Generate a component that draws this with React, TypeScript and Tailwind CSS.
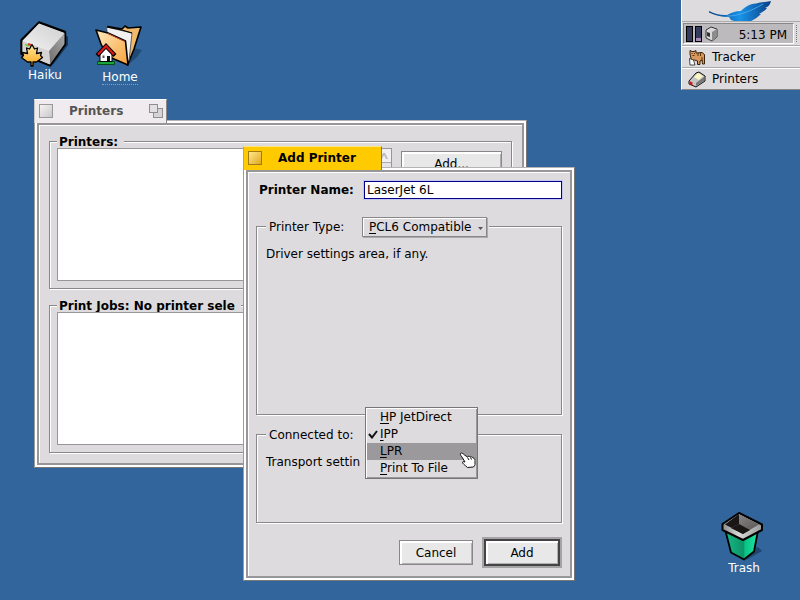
import React from "react";
import type { ReactNode } from "react";

function TabBox({ active }: { active?: boolean }) {
  return (
    <button
      type="button"
      aria-label="Close"
      className={
        active
          ? "size-[14px] shrink-0 border border-[#a07c10] bg-linear-to-br from-[#ffe88a] to-[#e0a800]"
          : "size-[14px] shrink-0 border border-[#999] bg-linear-to-br from-[#f4f4f4] to-[#c8c8c8]"
      }
    />
  );
}

function ZoomBox() {
  return (
    <button type="button" aria-label="Zoom" className="ml-auto size-[14px] shrink-0">
      <svg viewBox="0 0 14 14" className="size-[14px]">
        <rect x="4.500" y="4.500" width="9" height="9" fill="#d6d4d6" stroke="#8e8e8e" />
        <rect x="0.500" y="0.500" width="8" height="8" fill="#e2e0e2" stroke="#8e8e8e" />
      </svg>
    </button>
  );
}

type WindowProps = {
  title: string;
  active?: boolean;
  place: string;
  children: ReactNode;
};

function DesktopWindow({ title, active, place, children }: WindowProps) {
  return (
    <section aria-label={title} className={"absolute " + place}>
      <header
        className={
          active
            ? "relative -mb-[3px] flex h-6 w-[139px] gap-4 border-t border-r border-l border-t-[#ffe680] border-r-[#8a7a30] border-l-[#b0a880] bg-[#ffcb00] px-1 pt-1"
            : "relative -mb-[3px] flex h-6 w-[133px] gap-4 border-t border-r border-l border-t-white border-r-[#888] border-l-[#c8c8c8] bg-[#efebef] px-1 pt-1 pr-[3px]"
        }
      >
        <TabBox active={active} />
        <h2
          className={
            active
              ? "text-xs leading-[14px] font-bold text-black"
              : "text-xs leading-[14px] font-bold text-[#555]"
          }
        >
          {title}
        </h2>
        {!active && <ZoomBox />}
      </header>
      <div className="border border-t-[#b4b4b4] border-r-[#777] border-b-[#777] border-l-[#9c9c9c] bg-white p-[2px]">
        <div className="border-2 border-[#989698]">
          <div className="border-t border-l border-white bg-[#dedbde]">{children}</div>
        </div>
      </div>
    </section>
  );
}

const groupLine = "border border-[#888] shadow-[inset_1px_1px_0_#fff,1px_1px_0_#fff]";

function ListGroup({ title, children }: { title: string; children?: ReactNode }) {
  return (
    <fieldset className={"flex px-[7px] pb-[7px] " + groupLine}>
      <legend className="h-[14px] bg-[#dedbde] pr-[6px] pl-[2px] text-xs leading-[17px] font-bold whitespace-nowrap">
        {title}
      </legend>
      <div className="flex items-start gap-[9px]">
        <div className="relative flex h-[133px] w-[335px] justify-end border border-[#989698] bg-white">
          <div className="flex w-[15px] flex-col border-l border-[#989698] bg-[#e6e4e6]">
            <button
              type="button"
              aria-label="Scroll up"
              className="flex h-[14px] items-center justify-center border-b border-[#aaa] bg-[#f2f0f2]"
            >
              <svg viewBox="0 0 8 6" className="h-[6px] w-2">
                <path d="M0 6L3 0h2l3 6H6L4 2 2 6z" fill="#bbb" />
              </svg>
            </button>
          </div>
        </div>
        {children}
      </div>
    </fieldset>
  );
}

const raised =
  "border border-[#888] bg-[#e8e8e8] text-xs shadow-[inset_2px_2px_0_#fff,inset_-1px_-1px_0_#b0b0b0]";

function MenuItem({
  first,
  rest,
  checked,
  hover,
}: {
  first: string;
  rest: string;
  checked?: boolean;
  hover?: boolean;
}) {
  return (
    <li role="none">
      <button
        type="button"
        role="menuitemradio"
        aria-checked={!!checked}
        className={
          hover
            ? "flex h-[17px] w-full items-center bg-[#9b999b] text-left leading-[17px]"
            : "flex h-[17px] w-full items-center text-left leading-[17px]"
        }
      >
        <span className="flex w-[13px] justify-end pr-[2px]">
          {checked && (
            <svg viewBox="0 0 10 9" className="h-[9px] w-[10px]">
              <path d="M1 4l3 3.500L9 1" fill="none" stroke="#111" strokeWidth="2" />
            </svg>
          )}
        </span>
        <span>
          <u className="underline-offset-2">{first}</u>
          {rest}
        </span>
      </button>
    </li>
  );
}

function HandCursor() {
  return (
    <svg viewBox="0 0 18 18" className="absolute top-[44px] left-[93px] size-[18px]" aria-hidden="true">
      <path
        d="M1.500 1.500c1-1 2.500 0 4 1.500l3 2c.5-1 2-1 3 0 1-.5 2 .2 2.500 1 1 0 2 1 2 2.500v4c0 1-1 1.500-1.500 2.500l-6 .5c-1-1.500-3-2-4-3.500-1-1-1.500-2-.5-2.500l2 .5-3-5C2 4 1 2.500 1.500 1.500z"
        fill="#fff"
        stroke="#111"
      />
      <path d="M8.500 5.500l1.500 2.500M11.500 5.500l1 2" stroke="#111" fill="none" />
    </svg>
  );
}

function HaikuIcon() {
  return (
    <svg viewBox="0 0 50 48" className="h-12 w-[50px]">
      <defs>
        <linearGradient id="driveTop" x1="0" y1="1" x2="1" y2="0">
          <stop offset="0" stopColor="#f2f2f2" />
          <stop offset="1" stopColor="#cfcfcf" />
        </linearGradient>
        <linearGradient id="driveSide" x1="0" y1="1" x2="1" y2="0">
          <stop offset="0" stopColor="#6e6e6e" />
          <stop offset="1" stopColor="#a8a8a8" />
        </linearGradient>
        <linearGradient id="leafFill" x1="0" y1="0" x2="0" y2="1">
          <stop offset="0" stopColor="#ffe9a0" />
          <stop offset="1" stopColor="#f7a71c" />
        </linearGradient>
      </defs>
      <path d="M32 46L48 25v-8l-4-3z" fill="#102c48" opacity=".8" />
      <path d="M19 2.500L45 12v12L30 45.500 1.500 34V20z" fill="#dcdcdc" stroke="#000" strokeWidth="2.400" strokeLinejoin="round" />
      <path d="M19 3.500L44.500 13 29 31 2.500 21z" fill="url(#driveTop)" />
      <path d="M29 31L44.500 13v11L30 44.500z" fill="url(#driveSide)" />
      <path d="M2.500 21L29 31l1 13.500L2.500 33z" fill="#d4d4d4" />
      <path d="M5 24.500l4 1.500" stroke="#8c4" strokeWidth="2" />
      <path d="M8 24l3 1" stroke="#c33" strokeWidth="2" />
      <path
        d="M12 24.500l2.500 4.500 3-1-1 5.500 5-1-1 3 2 2-6 4.500h-3.500v4h-2v-4H7.500l-6-4.500 2-2-1-3 5 1-1-5.500 3 1z"
        fill="url(#leafFill)"
        stroke="#000"
        strokeWidth="1.300"
        strokeLinejoin="round"
      />
    </svg>
  );
}

function HomeIcon() {
  return (
    <svg viewBox="0 0 50 48" className="h-12 w-[50px]">
      <defs>
        <linearGradient id="folder" x1="0" y1="0" x2="1" y2="1">
          <stop offset="0" stopColor="#ffe9c0" />
          <stop offset="1" stopColor="#f7a23a" />
        </linearGradient>
      </defs>
      <path d="M33 43l9-8 5-7-8-2z" fill="#173a5c" opacity=".6" />
      <path
        d="M13 4.500L27 7l3-3 3 2 13-1-7 22-6.500 16L20 30z"
        fill="#f0b96c"
        stroke="#000"
        strokeWidth="1.600"
        strokeLinejoin="round"
      />
      <path d="M11.500 5L37 11l-3 28-20-14z" fill="#f0f0f0" stroke="#444" strokeWidth=".8" />
      <path d="M12 5l15 3 10 3" fill="none" stroke="#000" strokeWidth="1.200" />
      <path
        d="M1 8l12 3 17.500 8L33 43 12 34 6 22z"
        fill="url(#folder)"
        stroke="#000"
        strokeWidth="1.600"
        strokeLinejoin="round"
      />
      <path d="M13 11.500l17 8" stroke="#b8402a" strokeWidth="1" />
      <path d="M2.500 39.500h17v3h-17z" fill="#19a43c" stroke="#064d14" />
      <path d="M5 32l6-6 6 6v7.500H5z" fill="#fff" stroke="#000" />
      <path d="M12 34h3v5h-3z" fill="#111" />
      <path d="M7.500 33.500h2v2.500h-2z" fill="#555" />
      <path d="M2 33.500l9-9.500 9 9.500" fill="none" stroke="#000" strokeWidth="4" />
      <path d="M3 32.500l8-8.500 8 8.500" fill="none" stroke="#e01818" strokeWidth="2.200" />
    </svg>
  );
}

function TrashIcon() {
  return (
    <svg viewBox="0 0 46 50" className="h-[50px] w-[46px]">
      <defs>
        <linearGradient id="bin" x1="0" y1="0" x2="1" y2="0">
          <stop offset="0" stopColor="#18b884" />
          <stop offset=".55" stopColor="#0c9468" />
          <stop offset=".6" stopColor="#08c282" />
          <stop offset="1" stopColor="#20e8a6" />
        </linearGradient>
        <linearGradient id="wall" x1="0" y1="0" x2="1" y2="1">
          <stop offset="0" stopColor="#8f8f8f" />
          <stop offset="1" stopColor="#55504f" />
        </linearGradient>
        <linearGradient id="rim" x1="0" y1="0" x2="1" y2="0">
          <stop offset="0" stopColor="#8c8c8c" />
          <stop offset=".4" stopColor="#d8d8d8" />
          <stop offset="1" stopColor="#9a9a9a" />
        </linearGradient>
      </defs>
      <path d="M25 49l16-9-4-4-6 2z" fill="#173a5c" opacity=".7" />
      <path d="M4.500 20L10 41.500l13 7 10-8 4-21z" fill="url(#bin)" stroke="#000" strokeWidth="1.800" strokeLinejoin="round" />
      <path
        d="M18 2L1.500 13v6L22 29l19-10v-5.500z"
        fill="url(#rim)"
        stroke="#000"
        strokeWidth="2"
        strokeLinejoin="round"
      />
      <path d="M18 3L4 13.500 22 23l-4-9z" fill="#1a1616" />
      <path d="M18 3l20 10.500L22 23 10 17l8-4z" fill="url(#wall)" />
      <path d="M18 13l-8 4 12 6 7-4z" fill="#1a1616" />
    </svg>
  );
}

function Feather() {
  return (
    <svg viewBox="0 0 66 21" className="h-[21px] w-[66px]" aria-hidden="true">
      <defs>
        <linearGradient id="feather" x1="0" y1="0" x2="1" y2="0">
          <stop offset="0" stopColor="#0b3f86" />
          <stop offset=".5" stopColor="#1a93e8" />
          <stop offset="1" stopColor="#0a3f86" />
        </linearGradient>
      </defs>
      <path
        d="M1 11c6 3 12 4.500 18 4 4-2 8-4 14-4 4-4 8-7 15-7.500 5-1.500 10-1.500 15-2.500-1 4-3 6-6 7h2c-2 3-5 4-8 6h2c-3 3-6 5-10 7H26l-3-1-2-3C13 17 6 15 1 12.500z"
        fill="url(#feather)"
      />
      <path d="M19 16c12 0 24-5 36-12" fill="none" stroke="#5ab8f4" strokeWidth=".7" />
    </svg>
  );
}

function TrackerIcon() {
  return (
    <svg viewBox="0 0 18 17" className="h-[17px] w-[18px]" aria-hidden="true">
      <path
        d="M2 5V1.500l2 1h2l2-1V4l6-.5 2.500 2V15h-2l-.5-4-2 1v3.500H9.500V12l-3-1-3 .5z"
        fill="#d9995c"
        stroke="#3a2208"
        strokeLinejoin="round"
      />
      <path d="M1.500 9.500l4 1.500 1.500 5H2z" fill="#fff" stroke="#222" strokeWidth=".8" />
      <path d="M3.500 4.500h1M6 4.500h1M4.500 6.500h2M10 4v3M12.500 4v3M14 8v4" stroke="#5a3208" />
    </svg>
  );
}

function PrinterIcon() {
  return (
    <svg viewBox="0 0 18 17" className="h-[17px] w-[18px]" aria-hidden="true">
      <path d="M1 10l7-8 3-1 6 4v5l-9 6-7-3z" fill="#c4c4c4" stroke="#111" strokeLinejoin="round" />
      <path d="M6 6l4-4 5 3-4 4z" fill="#fbf7c0" />
      <path d="M8 12l8-6v4l-8 5z" fill="#777" />
      <path d="M1.500 10l3 1.500V15L2 13z" fill="#d01818" />
    </svg>
  );
}

function TrayDevice() {
  return (
    <svg viewBox="0 0 14 16" className="h-4 w-[14px]" aria-hidden="true">
      <path d="M1 4l5-3 6 2v8l-5 4-6-3z" fill="#d8d8d8" stroke="#333" strokeLinejoin="round" />
      <path d="M7 6l5-3v8l-5 4z" fill="#8c8c8c" />
      <path d="M2 6l3 1v4l-3-1z" fill="#333" />
    </svg>
  );
}

function DesktopIcon({
  label,
  place,
  marked,
  children,
}: {
  label: string;
  place: string;
  marked?: boolean;
  children: ReactNode;
}) {
  return (
    <button type="button" className={"absolute flex flex-col items-center text-xs text-white " + place}>
      {children}
      <span
        className={
          marked ? "border-b border-dotted border-[#7fa0c4] leading-[14px]" : "leading-[15px]"
        }
      >
        {label}
      </span>
    </button>
  );
}

function Deskbar() {
  return (
    <nav className="absolute top-0 right-0 w-[119px] border-b border-l border-b-[#888] border-l-white bg-[#dedbde] text-xs">
      <div className="flex h-[22px] items-end justify-center border-b border-[#aaa]">
        <Feather />
      </div>
      <div className="flex h-6 gap-[2px] border-b border-[#aaa] pt-[1px] pr-[2px] pb-[1px] pl-[1px]">
        <div className="flex flex-1 items-center border border-t-[#888] border-r-white border-b-white border-l-[#888] bg-[#bdbabd] px-[2px]">
          <div className="flex h-4 gap-[2px]">
            <span className="w-[7px] border border-black bg-[#363a5c]" />
            <span className="flex w-[7px] items-end border border-black bg-[#363a5c]">
              <span className="h-[3px] w-full bg-[#a888b8]" />
            </span>
          </div>
          <span className="ml-[3px]">
            <TrayDevice />
          </span>
          <time className="ml-auto pt-[2px] pr-1">5:13 PM</time>
        </div>
        <span className="my-[2px] w-[2px] border-l border-dotted border-[#777]" />
      </div>
      <button
        type="button"
        className="flex h-[22px] w-full items-center gap-[6px] border-t border-b border-t-white border-b-[#aaa] pl-[6px]"
      >
        <TrackerIcon />
        Tracker
      </button>
      <button type="button" className="flex h-[21px] w-full items-center gap-[6px] border-t border-white pl-[6px]">
        <PrinterIcon />
        Printers
      </button>
    </nav>
  );
}

export default function App() {
  return (
    <main className="relative min-h-screen w-full overflow-hidden bg-[#31659c] font-['DejaVu_Sans',sans-serif] text-xs text-black">
      <DesktopIcon label="Haiku" place="top-5 left-5">
        <HaikuIcon />
      </DesktopIcon>
      <DesktopIcon label="Home" place="top-[22px] left-[95px]" marked>
        <HomeIcon />
      </DesktopIcon>
      <DesktopIcon label="Trash" place="right-[33px] bottom-6">
        <TrashIcon />
      </DesktopIcon>

      <Deskbar />

      <DesktopWindow title="Printers" place="top-[99px] left-[34px] w-[493px]">
        <div className="flex flex-col gap-[9px] pt-2 pr-[10px] pb-[10px] pl-[9px]">
          <ListGroup title="Printers:">
            <button type="button" className={"mt-[3px] h-[25px] w-[101px] " + raised}>
              Add...
            </button>
          </ListGroup>
          <ListGroup title="Print Jobs: No printer sele" />
        </div>
      </DesktopWindow>

      <DesktopWindow title="Add Printer" active place="top-[146px] left-[243px] w-[332px]">
        <form className="pt-2 pr-2 pb-2 pl-[7px]" onSubmit={(e) => e.preventDefault()}>
          <div className="flex items-center gap-2 pl-[3px]">
            <label htmlFor="printer-name" className="w-[97px] font-bold whitespace-nowrap">
              Printer Name:
            </label>
            <input
              id="printer-name"
              defaultValue="LaserJet 6L"
              className="h-[18px] min-w-0 flex-1 border border-[#00008c] bg-white px-[2px] shadow-[0_0_0_1px_#c4c4ee] outline-none"
            />
          </div>

          <fieldset className={"mt-[17px] h-[199px] px-[9px] " + groupLine}>
            <legend className="bg-[#dedbde] pr-[2px] pl-[3px]">
              <div className="flex h-[21px] items-center gap-[15px]">
                <label htmlFor="printer-type" className="w-[78px] whitespace-nowrap">
                  Printer Type:
                </label>
                <div className="relative">
                  <select
                    id="printer-type"
                    className="block h-5 w-[125px] appearance-none border border-[#888] bg-[#dedbde] pl-[6px] text-xs shadow-[inset_1px_1px_0_#fff,1px_1px_0_#aaa] outline-none"
                  >
                    <option>PCL6 Compatible</option>
                  </select>
                  <span className="absolute bottom-[3px] left-[7px] h-px w-[7px] bg-black" />
                  <svg
                    viewBox="0 0 5 3"
                    className="pointer-events-none absolute top-[10px] right-1 h-[3px] w-[5px]"
                    aria-hidden="true"
                  >
                    <path d="M0 0h5L2.500 3z" fill="#555" />
                  </svg>
                </div>
              </div>
            </legend>
            <p className="pt-[9px]">Driver settings area, if any.</p>
          </fieldset>

          <fieldset className={"mt-[9px] h-[99px] px-[9px] " + groupLine}>
            <legend className="bg-[#dedbde] pl-[3px]">
              <div className="flex h-[21px] items-center gap-2">
                <span id="transport" className="w-[88px] whitespace-nowrap">
                  Connected to:
                </span>
                <div className="relative h-[21px] w-[113px]">
                  <ul
                    role="menu"
                    aria-labelledby="transport"
                    className="absolute -top-[17px] left-0 z-10 w-[113px] border border-[#777] bg-[#dedbde] p-px shadow-[inset_1px_1px_0_#fff,inset_-1px_-1px_0_#999]"
                  >
                    <MenuItem first="H" rest="P JetDirect" />
                    <MenuItem first="I" rest="PP" checked />
                    <MenuItem first="L" rest="PR" hover />
                    <MenuItem first="P" rest="rint To File" />
                    <li role="none">
                      <HandCursor />
                    </li>
                  </ul>
                </div>
              </div>
            </legend>
            <p className="pt-[9px]">Transport settin</p>
          </fieldset>

          <div className="mt-[14px] flex items-center justify-end gap-[9px]">
            <button type="button" className={"h-[25px] w-[74px] " + raised}>
              Cancel
            </button>
            <span className="flex bg-[#a5a3a5] p-[2px]">
              <button
                type="submit"
                className="h-[27px] w-[76px] border-2 border-[#444] bg-[#e8e8e8] text-xs shadow-[inset_2px_2px_0_#fff,inset_-1px_-1px_0_#b0b0b0]"
              >
                Add
              </button>
            </span>
          </div>
        </form>
      </DesktopWindow>
    </main>
  );
}
